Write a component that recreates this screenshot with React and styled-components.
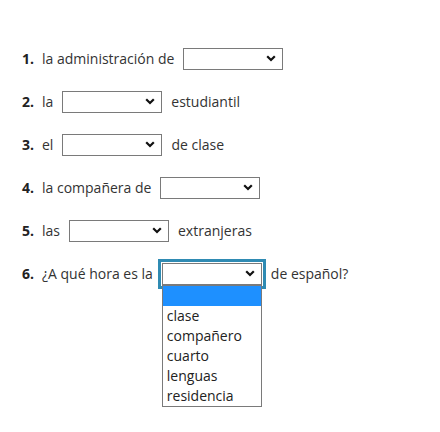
import React from 'react';
import styled, { createGlobalStyle } from 'styled-components';

const GlobalStyle = createGlobalStyle`
  html, body {
    margin: 0;
    padding: 0;
    background: #fff;
  }
  body {
    font-family: "Open Sans", "Noto Sans", sans-serif;
    font-size: 14px;
    color: #333;
  }
`;

const items = [
  { before: 'la administración de', after: '' },
  { before: 'la', after: 'estudiantil' },
  { before: 'el', after: 'de clase' },
  { before: 'la compañera de', after: '' },
  { before: 'las', after: 'extranjeras' },
  { before: '¿A qué hora es la', after: 'de español?', open: true },
];

const options = ['clase', 'compañero', 'cuarto', 'lenguas', 'residencia'];

const Chevron = () => (
  <svg width="10" height="7" viewBox="0 0 10 7">
    <path d="M1.2 1.2 L5 5 L8.8 1.2" fill="none" stroke="#111" strokeWidth="2.2" />
  </svg>
);

export default function App() {
  return (
    <>
      <GlobalStyle />
      <List>
        {items.map((it, i) => (
          <Row key={i}>
            <Num>{i + 1}.</Num>
            <Phrase>{it.before}</Phrase>
            <SelectWrap>
              <SelectBox $focused={it.open}>
                <Chevron />
              </SelectBox>
              {it.open && (
                <Menu>
                  <Option $selected />
                  {options.map(o => (
                    <Option key={o}>{o}</Option>
                  ))}
                </Menu>
              )}
            </SelectWrap>
            {it.after && <Phrase>{it.after}</Phrase>}
          </Row>
        ))}
      </List>
    </>
  );
}

const List = styled.div`
  box-sizing: border-box;
  min-height: 432px;
  padding: 37px 0 0 22px;
`;

const Row = styled.div`
  display: flex;
  align-items: center;
  height: 43px;
`;

const Num = styled.span`
  font-weight: 700;
  color: #222;
  width: 20px;
`;

const Phrase = styled.span`
  white-space: nowrap;
`;

const SelectWrap = styled.div`
  position: relative;
  margin: 0 9px;
`;

const SelectBox = styled.div`
  box-sizing: border-box;
  width: 100px;
  height: 22px;
  border: 1px solid #7a7a7a;
  background: #fff;
  display: flex;
  align-items: center;
  justify-content: flex-end;
  padding-right: 6px;
  box-shadow: ${p => (p.$focused ? '0 0 0 1px #fff, 0 0 0 4px #2f8bb3' : 'none')};
`;

const Menu = styled.div`
  position: absolute;
  top: 22px;
  left: 0;
  width: 100px;
  box-sizing: border-box;
  border: 1px solid #7a7a7a;
  background: #fff;
  z-index: 2;
`;

const Option = styled.div`
  height: 20px;
  line-height: 20px;
  padding-left: 4px;
  color: #222;
  background: ${p => (p.$selected ? '#1e90ff' : '#fff')};
`;
